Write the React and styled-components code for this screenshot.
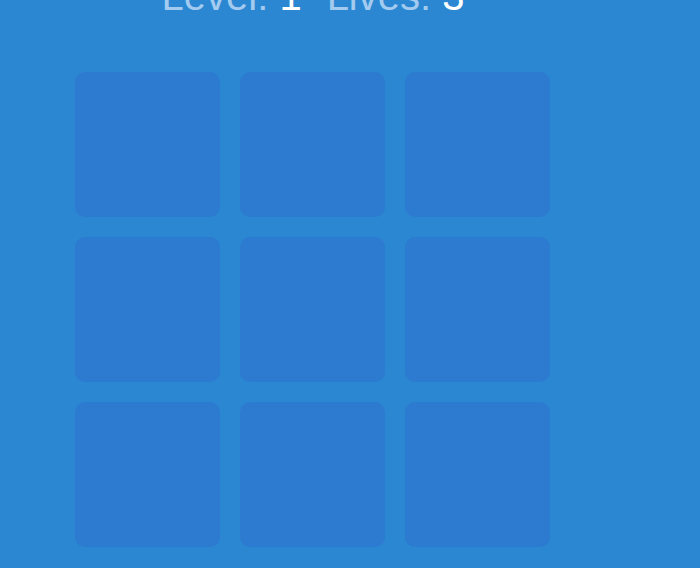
import styled, { createGlobalStyle } from "styled-components";

const GlobalStyle = createGlobalStyle`
  body {
    margin: 0;
    background-color: #2b87d1;
    font-family: "Liberation Sans", Arial, sans-serif;
  }
`;

// the board is 3x3, tiles are all idle in this state
const tiles = Array.from({ length: 9 }, (_, i) => i);

function App() {
  return (
    <Page>
      <GlobalStyle />
      <Header>
        <Stat>
          Level: <Value>1</Value>
        </Stat>
        <Stat>
          Lives: <Value>3</Value>
        </Stat>
      </Header>
      <Board>
        {tiles.map((t) => (
          <Tile key={t} />
        ))}
      </Board>
    </Page>
  );
}

export default App;

const Page = styled.div`
  width: 625px;
  min-height: 568px;
  display: flex;
  flex-direction: column;
  align-items: center;
`;

const Header = styled.h2`
  margin: -27px 0 0 0;
  padding-left: 1px;
  font-size: 40px;
  font-weight: 400;
  line-height: 46px;
  color: #a3cbef;
  display: flex;
  gap: 25px;
  white-space: pre;
`;

const Stat = styled.span``;

const Value = styled.span`
  color: #ffffff;
`;

const Board = styled.div`
  margin-top: 53px;
  display: grid;
  grid-template-columns: repeat(3, 145px);
  grid-auto-rows: 145px;
  gap: 20px;
`;

const Tile = styled.div`
  background-color: #2d7bd0;
  border-radius: 10px;
`;
